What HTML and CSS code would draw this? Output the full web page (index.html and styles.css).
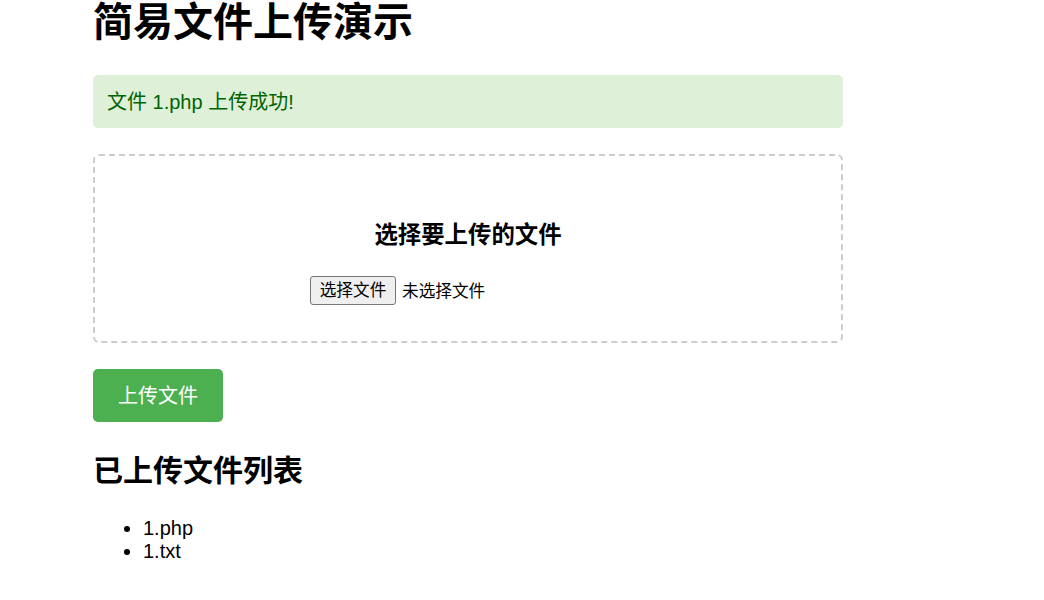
FILE: index.html
```html
<!DOCTYPE html>
<html lang="zh-CN">
<head>
<meta charset="utf-8">
<title>简易文件上传演示</title>
<link rel="stylesheet" href="styles.css">
</head>
<body>
<div class="page">
  <h1 class="title">简易文件上传演示</h1>
  <div class="message">文件 1.php 上传成功!</div>
  <form class="upload-form">
    <div class="drop-zone">
      <h3 class="drop-title">选择要上传的文件</h3>
      <div class="file-row">
        <div class="file-input">
          <span class="file-btn">选择文件</span>
          <span class="file-name">未选择文件</span>
        </div>
      </div>
    </div>
    <button type="button" class="submit-btn">上传文件</button>
  </form>
  <h2 class="list-title">已上传文件列表</h2>
  <ul class="file-list">
    <li>1.php</li>
    <li>1.txt</li>
  </ul>
</div>
</body>
</html>
```

FILE: styles.css
```css
html, body {
  margin: 0;
  padding: 0;
  background: #ffffff;
}
body {
  font-family: "Liberation Sans", Arial, "Noto Sans CJK SC", sans-serif;
  font-size: 20px;
  color: #000;
}
.page {
  width: 750px;
  margin-left: 93px;
}
.title {
  margin: 0 0 31px 0;
  font-size: 40px;
  line-height: 44px;
  font-weight: bold;
}
.message {
  background: #dff0d8;
  color: #006400;
  border-radius: 5px;
  padding: 0 14px;
  height: 53px;
  line-height: 54px;
  font-size: 20px;
}
.upload-form {
  margin: 26px 0 0 0;
}
.drop-zone {
  border: 2px dashed #cccccc;
  border-radius: 6px;
  padding: 40px 20px 36px;
  text-align: center;
}
.drop-title {
  margin: 25px 0 27px;
  font-size: 23.4px;
  line-height: 28px;
  font-weight: bold;
}
.file-row {
  display: flex;
  justify-content: center;
}
.file-input {
  width: 316px;
  height: 29px;
  display: flex;
  align-items: center;
  gap: 6px;
  text-align: left;
  font-size: 16.67px;
}
.file-btn {
  display: inline-block;
  box-sizing: border-box;
  width: 86px;
  height: 29px;
  line-height: 28px;
  text-align: center;
  background: #efefef;
  border: 1px solid #767676;
  border-radius: 3px;
}
.file-name {
  line-height: 29px;
  padding-top: 2px;
}
.submit-btn {
  display: block;
  margin-top: 26px;
  width: 130px;
  height: 53px;
  padding: 0;
  border: none;
  border-radius: 5px;
  background: #4caf50;
  color: #ffffff;
  font-family: inherit;
  font-size: 20px;
  line-height: 55px;
  cursor: pointer;
}
.list-title {
  margin: 32px 0 0 0;
  font-size: 30px;
  line-height: 34px;
  font-weight: bold;
}
.file-list {
  margin: 29px 0 0 0;
  padding-left: 50px;
  font-size: 20px;
  line-height: 23px;
}
```
